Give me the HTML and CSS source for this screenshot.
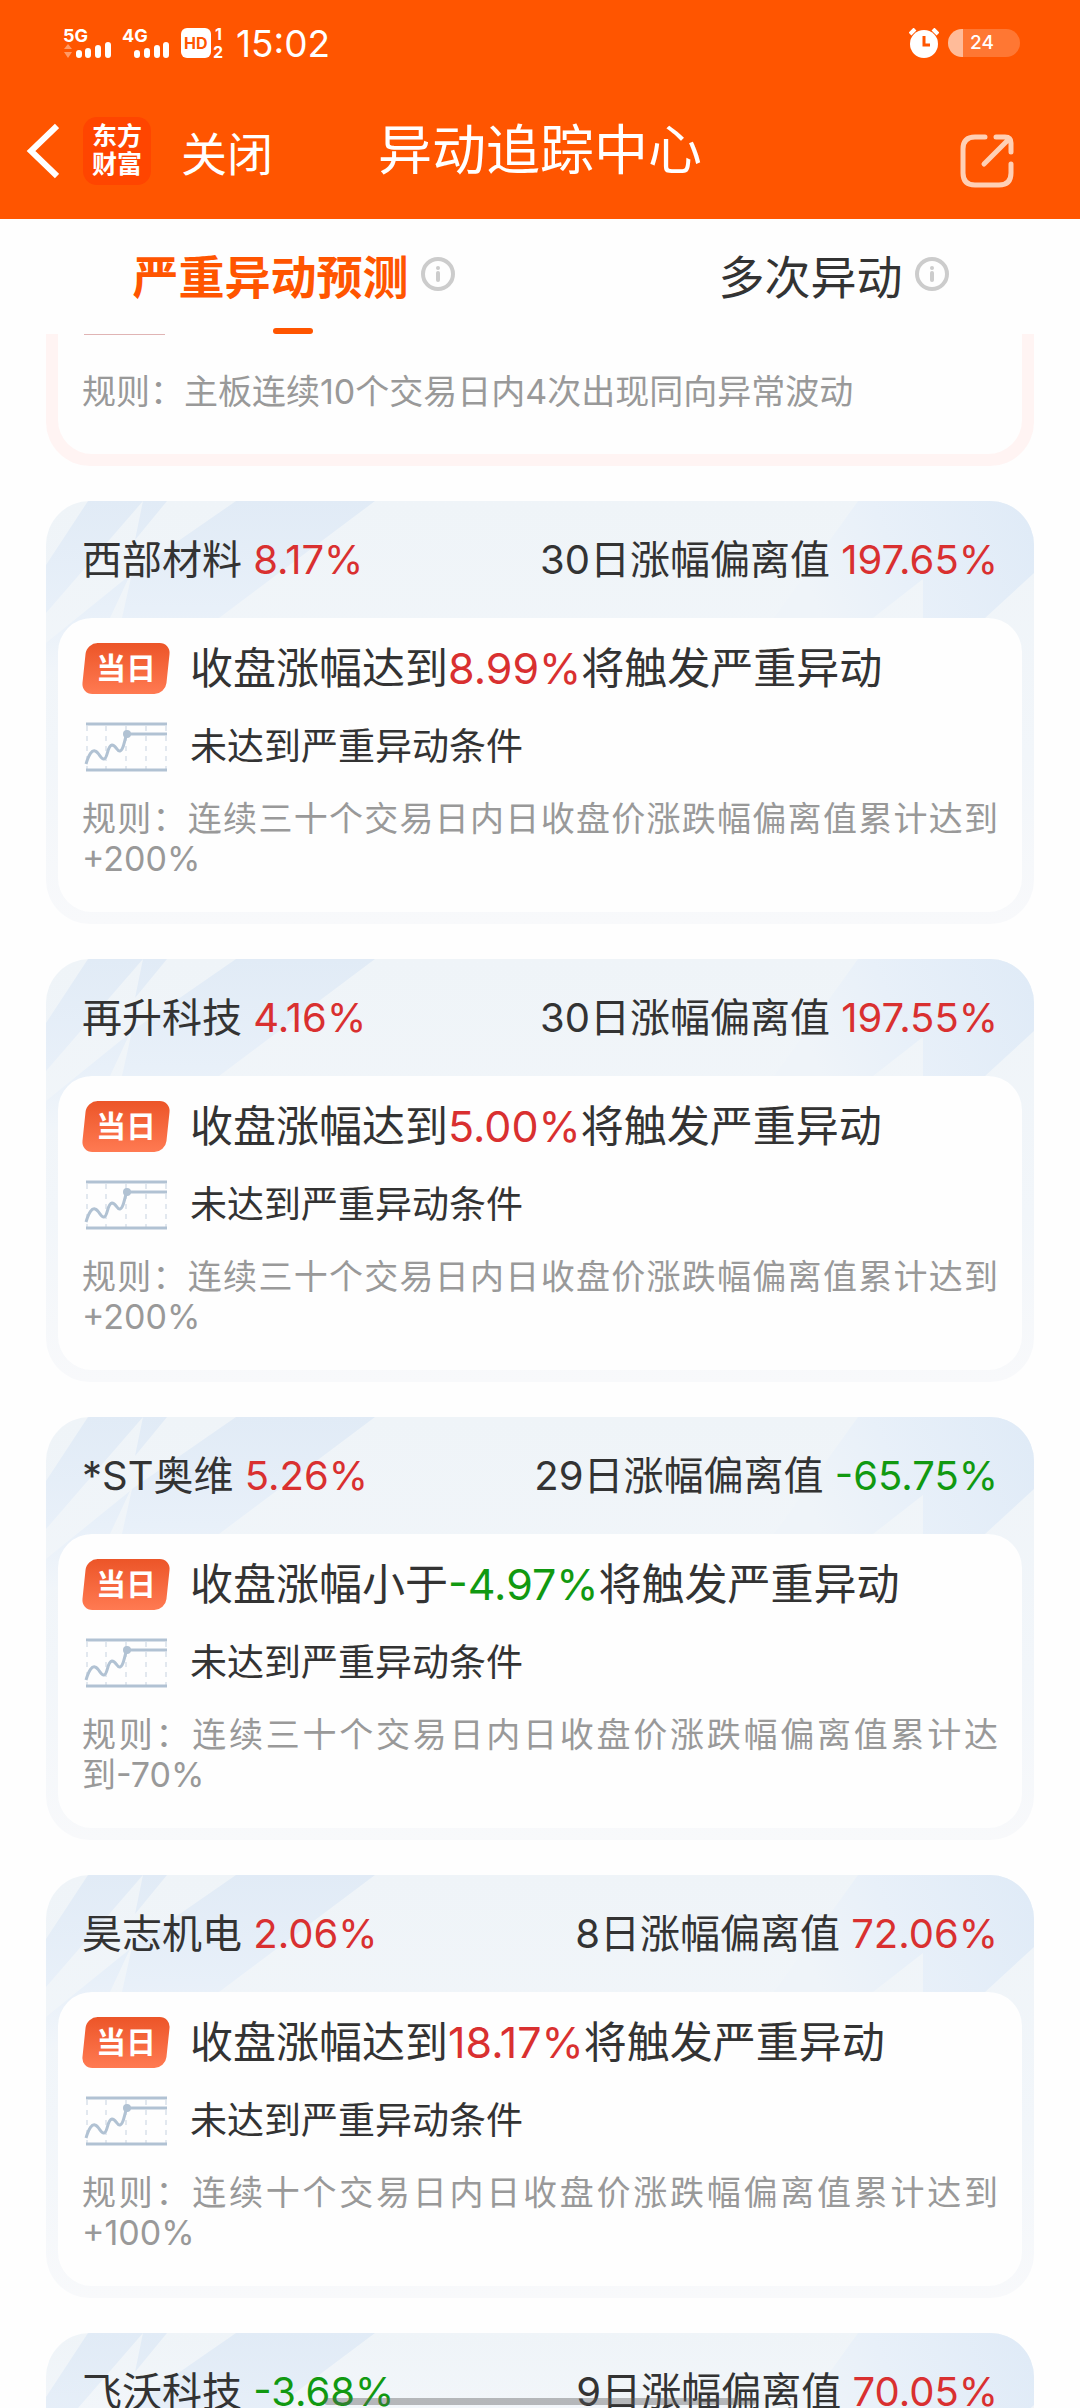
FILE: index.html
```html
<!DOCTYPE html>
<html lang="zh-CN">
<head>
    <meta charset="UTF-8">
    <meta name="viewport" content="width=device-width, initial-scale=1.0">
    <title>异动追踪中心</title>

    <link rel="stylesheet" href="styles.css">
</head>
<body>
    <!-- shared shapes -->
    <svg class="sprite" width="0" height="0" aria-hidden="true">
        <defs>
            <linearGradient id="fade" x1="0" y1="0" x2="0" y2="1">
                <stop offset="0" stop-color="#e1ebf6"/>
                <stop offset="0.6" stop-color="#e8f0f9"/>
                <stop offset="1" stop-color="#f2f6fa"/>
            </linearGradient>
            <linearGradient id="fadeRight" gradientUnits="userSpaceOnUse" x1="40" y1="100" x2="250" y2="10">
                <stop offset="0" stop-color="#eff4f9"/>
                <stop offset="0.4" stop-color="#e8f0f9"/>
                <stop offset="1" stop-color="#e0ebf7"/>
            </linearGradient>
        </defs>
        <symbol id="raysLeft" viewBox="0 0 340 200">
            <path fill="url(#fade)" d="M42 0H97L0 112V64ZM97 0H121L89 39ZM190 0H329L173 117L120 160L60 130L76 117L86 72ZM84 74L64 117L0 180V142Z"/>
        </symbol>
        <symbol id="raysRight" viewBox="0 0 260 200">
            <path fill="url(#fadeRight)" d="M84 0H260V72L211 117H149V78L99 117H0Z"/>
        </symbol>
        <symbol id="info" viewBox="0 0 34 34">
            <circle cx="17" cy="17" r="15" fill="none" stroke="#ccc" stroke-width="4"/>
            <circle cx="17" cy="11" r="2" fill="#ccc"/>
            <path d="M17 16V23" stroke="#ccc" stroke-width="4" stroke-linecap="round"/>
        </symbol>
        <symbol id="chart" viewBox="0 0 84 50">
            <path d="M3 4V47M22 4V47M42 4V47M62 4V47M82 4V47" stroke="#d9e1ea" stroke-width="1.5" stroke-dasharray="5 5"/>
            <path d="M2 2H83M2 48H83" stroke="#b1c2d3" stroke-width="3"/>
            <path d="M2 42C5 32 8 28 11 29C15 30 17 38 20 37C24 36 23 24 28 23C32 23 33 30 36 29C40 28 40 18 43 12H83" fill="none" stroke="#b1c2d3" stroke-width="3"/>
            <circle cx="43" cy="12" r="4" fill="#b1c2d3"/>
        </symbol>
    </svg>

    <div class="container">
        <header>
            <div class="status">
                <div class="statusLeft">
                    <svg width="48" height="32" viewBox="0 0 48 32">
                        <text class="tiny" x="0" y="15">5G</text>
                        <path fill="#ff9a66" d="M1 22L5 17L9 22ZM1 25H9L5 31Z"/>
                        <path fill="none" stroke="#fff" stroke-width="6" stroke-linecap="round" d="M16 26V28M25 24V28M35 21V28M45 18V28"/>
                    </svg>
                    <svg width="48" height="32" viewBox="0 0 48 32">
                        <text class="tiny" x="0" y="15">4G</text>
                        <path fill="none" stroke="#fff" stroke-width="6" stroke-linecap="round" d="M15 26V28M25 24V28M35 21V28M44 18V28"/>
                    </svg>
                    <svg width="44" height="32" viewBox="0 0 44 32">
                        <rect x="0" y="1" width="30" height="30" rx="6" fill="#fff"/>
                        <text class="hd" x="3" y="22">HD</text>
                        <text class="tiny sim" x="34" y="13">1</text>
                        <text class="tiny sim" x="32" y="31">2</text>
                    </svg>
                    <span class="time">15:02</span>
                </div>
                <div class="statusRight">
                    <svg width="30" height="30" viewBox="0 0 30 30">
                        <circle cx="15" cy="16" r="14" fill="#fff"/>
                        <path d="M1 6L6 1M24 1L29 6" stroke="#fff" stroke-width="4"/>
                        <path d="M15 8V17H21" fill="none" stroke="#ff5500" stroke-width="3"/>
                    </svg>
                    <div class="battery">24</div>
                </div>
            </div>
            <nav>
                <div class="navLeft">
                    <button class="back" aria-label="返回">
                        <svg width="34" height="56" viewBox="0 0 34 56">
                            <path d="M32 3L6 28L32 53" fill="none" stroke="#fff" stroke-width="6"/>
                        </svg>
                    </button>
                    <div class="logo">东方<br>财富</div>
                    <button class="close">关闭</button>
                </div>
                <h1>异动追踪中心</h1>
                <div class="navRight">
                    <button class="share" aria-label="分享">
                        <svg width="54" height="54" viewBox="0 0 54 54">
                            <path d="M25 3H15Q3 3 3 15V39Q3 51 15 51H39Q51 51 51 39V30M36 3H45Q51 3 51 9V18M49 5L24 30" fill="none" stroke="#ffd0b5" stroke-width="5" stroke-linecap="round"/>
                        </svg>
                    </button>
                </div>
            </nav>
        </header>

        <div class="tabs">
            <div class="tab active">
                <button>严重异动预测</button>
                <svg width="34" height="34"><use href="#info"/></svg>
            </div>
            <div class="tab">
                <button>多次异动</button>
                <svg width="34" height="34"><use href="#info"/></svg>
            </div>
        </div>

        <main>
            <div class="card cut">
                <div class="box">
                    <p class="rule">规则：主板连续10个交易日内4次出现同向异常波动</p>
                </div>
            </div>

            <div class="card">
                <svg class="rays left" width="340" height="200"><use href="#raysLeft"/></svg>
                <svg class="rays right" width="260" height="200"><use href="#raysRight"/></svg>
                <div class="cardHead">
                    <h2>西部材料 <span class="up">8.17%</span></h2>
                    <p>30日涨幅偏离值 <span class="up">197.65%</span></p>
                </div>
                <div class="box">
                    <div class="row">
                        <span class="badge">当日</span>
                        <p class="trigger">收盘涨幅达到<span class="up">8.99%</span>将触发严重异动</p>
                    </div>
                    <div class="row">
                        <svg width="84" height="50"><use href="#chart"/></svg>
                        <p class="state">未达到严重异动条件</p>
                    </div>
                    <p class="rule">规则：连续三十个交易日内日收盘价涨跌幅偏离值累计达到+200%</p>
                </div>
            </div>

            <div class="card">
                <svg class="rays left" width="340" height="200"><use href="#raysLeft"/></svg>
                <svg class="rays right" width="260" height="200"><use href="#raysRight"/></svg>
                <div class="cardHead">
                    <h2>再升科技 <span class="up">4.16%</span></h2>
                    <p>30日涨幅偏离值 <span class="up">197.55%</span></p>
                </div>
                <div class="box">
                    <div class="row">
                        <span class="badge">当日</span>
                        <p class="trigger">收盘涨幅达到<span class="up">5.00%</span>将触发严重异动</p>
                    </div>
                    <div class="row">
                        <svg width="84" height="50"><use href="#chart"/></svg>
                        <p class="state">未达到严重异动条件</p>
                    </div>
                    <p class="rule">规则：连续三十个交易日内日收盘价涨跌幅偏离值累计达到+200%</p>
                </div>
            </div>

            <div class="card">
                <svg class="rays left" width="340" height="200"><use href="#raysLeft"/></svg>
                <svg class="rays right" width="260" height="200"><use href="#raysRight"/></svg>
                <div class="cardHead">
                    <h2>*ST奥维 <span class="up">5.26%</span></h2>
                    <p>29日涨幅偏离值 <span class="down">-65.75%</span></p>
                </div>
                <div class="box">
                    <div class="row">
                        <span class="badge">当日</span>
                        <p class="trigger">收盘涨幅小于<span class="down">-4.97%</span>将触发严重异动</p>
                    </div>
                    <div class="row">
                        <svg width="84" height="50"><use href="#chart"/></svg>
                        <p class="state">未达到严重异动条件</p>
                    </div>
                    <p class="rule">规则：连续三十个交易日内日收盘价涨跌幅偏离值累计达到-70%</p>
                </div>
            </div>

            <div class="card">
                <svg class="rays left" width="340" height="200"><use href="#raysLeft"/></svg>
                <svg class="rays right" width="260" height="200"><use href="#raysRight"/></svg>
                <div class="cardHead">
                    <h2>昊志机电 <span class="up">2.06%</span></h2>
                    <p>8日涨幅偏离值 <span class="up">72.06%</span></p>
                </div>
                <div class="box">
                    <div class="row">
                        <span class="badge">当日</span>
                        <p class="trigger">收盘涨幅达到<span class="up">18.17%</span>将触发严重异动</p>
                    </div>
                    <div class="row">
                        <svg width="84" height="50"><use href="#chart"/></svg>
                        <p class="state">未达到严重异动条件</p>
                    </div>
                    <p class="rule">规则：连续十个交易日内日收盘价涨跌幅偏离值累计达到+100%</p>
                </div>
            </div>

            <div class="card">
                <svg class="rays left" width="340" height="200"><use href="#raysLeft"/></svg>
                <svg class="rays right" width="260" height="200"><use href="#raysRight"/></svg>
                <div class="cardHead">
                    <h2>飞沃科技 <span class="down">-3.68%</span></h2>
                    <p>9日涨幅偏离值 <span class="up">70.05%</span></p>
                </div>
            </div>
        </main>
    </div>
    <div class="homeBar"></div>
</body>
</html>
```
FILE: styles.css
```css
*{
    box-sizing: border-box;
}

body{
    margin: 0;
    background-color: #fefefe;
    color: #333;
    font-family: Inter, "Noto Sans CJK SC", sans-serif;
}

h1, h2, p{
    margin: 0;
    font-weight: normal;
}

button{
    padding: 0;
    border: none;
    background: none;
    color: inherit;
    font: inherit;
    cursor: pointer;
}

svg{
    display: block;
    flex-shrink: 0;
}

.sprite{
    position: absolute;
}

.container{
    display: flex;
    flex-direction: column;
    height: 100vh;
    overflow: hidden;
}

header{
    flex-shrink: 0;
    background-color: #ff5500;
    color: white;
}

/* status bar */
.status{
    display: flex;
    justify-content: space-between;
    align-items: center;
    height: 86px;
    padding: 0 60px 0 63px;
}

.statusLeft, .statusRight{
    display: flex;
    align-items: center;
}

.statusLeft{
    gap: 11px;
}

.statusLeft svg{
    overflow: visible;
}

.statusRight{
    gap: 9px;
}

.tiny{
    fill: white;
    font-size: 18px;
    font-weight: bold;
}

.sim{
    font-size: 16px;
}

.hd{
    fill: #ff5500;
    font-size: 16px;
    font-weight: bold;
}

.time{
    font-size: 37px;
}

.battery{
    width: 72px;
    height: 28px;
    padding-left: 22px;
    border-radius: 14px;
    background: linear-gradient(to right, #ffbb99 15px, #ff7733 15px);
    font-size: 19px;
    font-weight: 500;
    line-height: 28px;
}

nav{
    display: grid;
    grid-template-columns: 1fr auto 1fr;
    align-items: center;
    height: 133px;
    padding: 0 66px 4px;
}

.navLeft{
    display: flex;
    align-items: center;
    margin-left: -41px;
}

.logo{
    width: 68px;
    height: 68px;
    margin: 0 30px 0 24px;
    padding-top: 5px;
    border-radius: 14px;
    background-color: #ff4500;
    font-size: 25px;
    font-weight: bold;
    line-height: 28px;
    text-align: center;
}

.close{
    font-size: 46px;
}

h1{
    font-size: 54px;
    line-height: 70px;
}

.navRight{
    display: flex;
    justify-content: flex-end;
    padding-top: 20px;
}

/* tabs */
.tabs{
    display: flex;
    flex-shrink: 0;
    height: 115px;
}

.tab{
    display: flex;
    flex: 1;
    justify-content: center;
    align-items: center;
    gap: 12px;
    position: relative;
    padding: 0 0 6px 47px;
    font-size: 46px;
}

.active{
    color: #ff5500;
    font-weight: bold;
}

.active::after{
    content: "";
    position: absolute;
    bottom: 0;
    left: calc(50% + 3px);
    width: 40px;
    height: 6px;
    border-radius: 3px;
    background-color: #ff5500;
}

/* list */
main{
    display: flex;
    flex-direction: column;
    flex: 1;
    gap: 35px;
    overflow: hidden;
    padding: 0 46px;
}

.card{
    flex-shrink: 0;
    position: relative;
    overflow: hidden;
    padding: 0 12px 12px;
    border-radius: 44px;
    background: linear-gradient(#eff4f8, #f2f6fa 60%, #f8f9fb);
}

.rays{
    position: absolute;
    top: 0;
}

.left{
    left: 0;
}

.right{
    right: 0;
}

.cardHead{
    display: flex;
    justify-content: space-between;
    align-items: center;
    position: relative;
    height: 117px;
    padding: 0 24px;
}

.cardHead h2, .cardHead p{
    font-size: 40px;
    line-height: 48px;
}

.box{
    position: relative;
    padding: 25px 24px 33px;
    border-radius: 34px;
    background-color: #fefefe;
}

.row{
    display: flex;
    align-items: center;
    height: 51px;
    margin-bottom: 27px;
}

.row svg, .badge{
    width: 88px;
    margin-right: 20px;
}

.badge{
    position: relative;
    z-index: 0;
    height: 51px;
    color: white;
    font-size: 30px;
    font-weight: bold;
    line-height: 51px;
    text-align: center;
}

.badge::before{
    content: "";
    position: absolute;
    inset: 0 2px;
    z-index: -1;
    border-radius: 11px;
    background: linear-gradient(#ec5528, #ff7a52);
    transform: skewX(-6deg);
}

.trigger{
    font-size: 43px;
    line-height: 51px;
}

.state{
    font-size: 37px;
    line-height: 50px;
}

.rule{
    color: #999;
    font-size: 34px;
    line-height: 40px;
    text-align: justify;
}

.up{
    color: #d93030;
}

.down{
    color: #119911;
}

/* the card that is scrolled under the tabs */
.cut{
    border-radius: 0 0 44px 44px;
    background: #fff4f3;
}

.cut .box{
    padding: 38px 24px 42px;
    border-radius: 0 0 34px 34px;
}

.cut .box::before{
    content: "";
    position: absolute;
    top: 0;
    left: 26px;
    width: 81px;
    height: 1px;
    background-color: #e0b4b4;
}

.homeBar{
    position: fixed;
    bottom: 3px;
    left: 30%;
    width: 40%;
    height: 7px;
    border-radius: 4px;
    background-color: rgba(90, 90, 90, 0.4);
}
```
